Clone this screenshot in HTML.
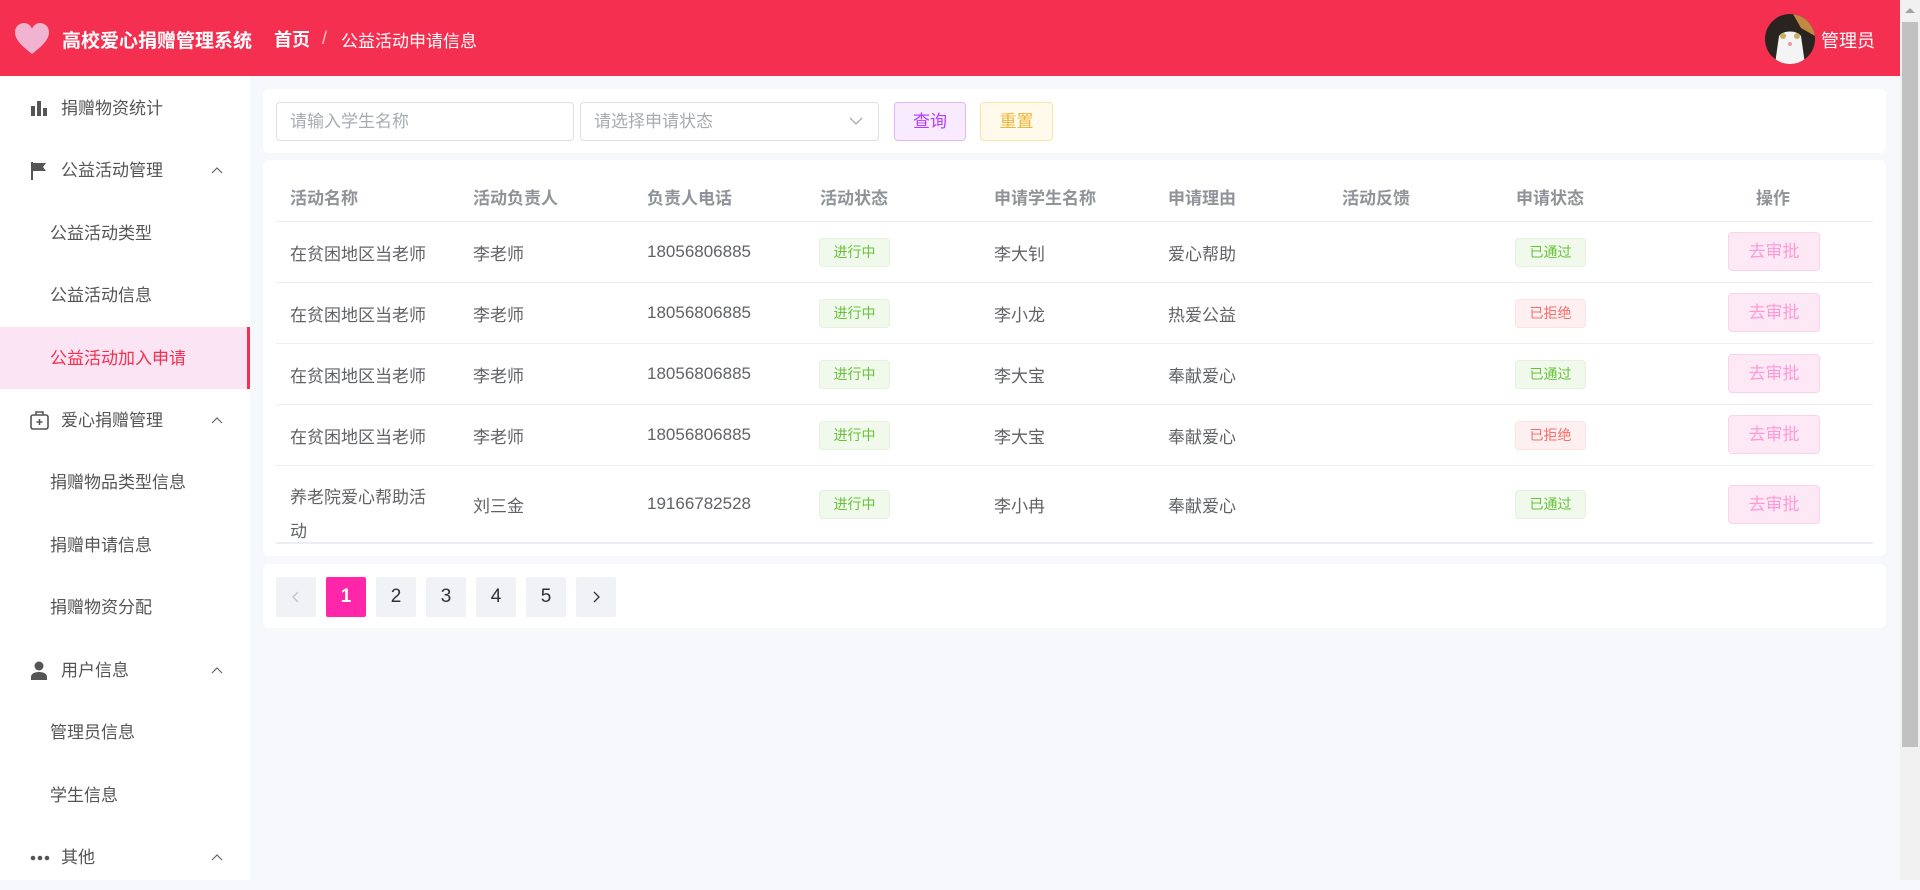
<!DOCTYPE html>
<html><head><meta charset="utf-8"><style>
*{box-sizing:border-box;margin:0;padding:0}
body{width:1920px;height:880px;overflow:hidden;background:#f6f8fc;font-family:"Liberation Sans","Noto Sans CJK SC",sans-serif;position:relative;color:#606266}
.a{position:absolute;white-space:nowrap}
.hdr{left:0;top:0;width:1900px;height:76px;background:#f42f4f}
.side{left:0;top:76px;width:250px;height:804px;background:#fff}
.mi{position:absolute;left:0;width:250px;height:62px;line-height:64px;font-size:17px;color:#555}
.mi .t{position:absolute;left:61px}
.mi.s .t{left:50px}
.mi .ar{position:absolute;left:211px;top:27px}
.mi .ic{position:absolute;left:30px;top:22px}
.card{position:absolute;background:#fff;border-radius:6px}
.th{position:absolute;top:184px;font-size:17px;font-weight:bold;color:#909399}
.td{position:absolute;font-size:17px;color:#606266;line-height:24px;margin-top:3px}
.n{margin-top:0}
.line{position:absolute;left:276px;width:1597px;height:1px;background:#ebeef5}
.tag{position:absolute;height:29px;line-height:27px;font-size:14px;text-align:center;border:1px solid;border-radius:4px}
.g{background:#f0f9eb;border-color:#e1f3d8;color:#67c23a}
.r{background:#fef0f0;border-color:#fde2e2;color:#f56c6c}
.btn{position:absolute;left:1728px;width:92px;height:39px;line-height:37px;text-align:center;font-size:17px;background:#fde9f6;border:1px solid #fcd3ee;color:#ff9ad6;border-radius:4px}
.pg{position:absolute;top:577px;width:40px;height:40px;line-height:40px;text-align:center;background:#f0f2f5;font-size:19px;color:#303133;border-radius:2px}
</style></head><body>
<div class="a hdr"></div>
<svg class="a" style="left:14px;top:22px" width="36" height="34" viewBox="0 0 36 34"><path d="M18 32 C8 24 1 18 1 10 C1 4 6 1 10 1 C14 1 17 4 18 7 C19 4 22 1 26 1 C30 1 35 4 35 10 C35 18 28 24 18 32Z" fill="#f1b4d0"/></svg>
<div class="a" style="left:62px;top:26px;font-size:19px;font-weight:bold;color:#fff">高校爱心捐赠管理系统</div>
<div class="a" style="left:274px;top:26px;font-size:18px;font-weight:bold;color:#fff">首页</div>
<div class="a" style="left:322px;top:28px;font-size:18px;color:#f7c7cf">/</div>
<div class="a" style="left:341px;top:27px;font-size:17px;color:#fff">公益活动申请信息</div>
<svg class="a" style="left:1765px;top:14px" width="50" height="50" viewBox="0 0 50 50"><defs><clipPath id="c"><circle cx="25" cy="25" r="25"/></clipPath></defs><g clip-path="url(#c)"><rect width="50" height="50" fill="#2a2420"/><path d="M28 0h22v22L36 14z" fill="#c08a40"/><path d="M14 22c4-6 18-6 22 0l4 28H10z" fill="#f4f4f4"/><circle cx="18" cy="22" r="3" fill="#c9b060"/><circle cx="32" cy="22" r="3" fill="#c9b060"/><circle cx="25" cy="30" r="2" fill="#e89aa0"/></g></svg>
<div class="a" style="left:1821px;top:27px;font-size:18px;color:#fff">管理员</div>
<div class="a" style="left:1900px;top:0;width:20px;height:880px;background:#f1f1f1"></div>
<div class="a" style="left:1902px;top:22px;width:16px;height:725px;background:#c1c1c1"></div>
<div class="a" style="left:1905px;top:8px;width:0;height:0;border-left:5px solid transparent;border-right:5px solid transparent;border-bottom:5px solid #a3a3a3"></div>

<div class="a side"></div>
<div class="mi" style="top:77px"><svg class="ic" width="18" height="18"><rect x="1" y="7" width="4" height="10" fill="#555"/><rect x="7" y="2" width="4" height="15" fill="#555"/><rect x="13" y="9" width="4" height="8" fill="#555"/></svg><span class="t">捐赠物资统计</span></div>
<div class="mi" style="top:139px"><svg class="ic" width="18" height="20"><path d="M2 1v18" stroke="#555" stroke-width="2"/><path d="M3 2h13l-3 4 3 4H3z" fill="#555"/></svg><span class="t">公益活动管理</span><svg class="ar" width="12" height="8"><path d="M1 7l5-5 5 5" stroke="#666" fill="none" stroke-width="1.2"/></svg></div>
<div class="mi s" style="top:202px"><span class="t">公益活动类型</span></div>
<div class="mi s" style="top:264px"><span class="t">公益活动信息</span></div>
<div class="mi s" style="top:327px;background:#fbe4f4;color:#f42f4f;border-right:3px solid #f42f4f"><span class="t">公益活动加入申请</span></div>
<div class="mi" style="top:389px"><svg class="ic" width="20" height="20"><rect x="1" y="4" width="17" height="14" rx="2" fill="none" stroke="#555" stroke-width="1.6"/><path d="M6 4V1h7v3M9.5 8v6M6.5 11h6" stroke="#555" stroke-width="1.6" fill="none"/></svg><span class="t">爱心捐赠管理</span><svg class="ar" width="12" height="8"><path d="M1 7l5-5 5 5" stroke="#666" fill="none" stroke-width="1.2"/></svg></div>
<div class="mi s" style="top:451px"><span class="t">捐赠物品类型信息</span></div>
<div class="mi s" style="top:514px"><span class="t">捐赠申请信息</span></div>
<div class="mi s" style="top:576px"><span class="t">捐赠物资分配</span></div>
<div class="mi" style="top:639px"><svg class="ic" width="18" height="20"><circle cx="9" cy="5" r="4.5" fill="#555"/><path d="M1 19v-3c0-3 3-5 8-5s8 2 8 5v3z" fill="#555"/></svg><span class="t">用户信息</span><svg class="ar" width="12" height="8"><path d="M1 7l5-5 5 5" stroke="#666" fill="none" stroke-width="1.2"/></svg></div>
<div class="mi s" style="top:701px"><span class="t">管理员信息</span></div>
<div class="mi s" style="top:764px"><span class="t">学生信息</span></div>
<div class="mi" style="top:826px"><svg class="ic" width="22" height="20"><circle cx="3" cy="10" r="2.3" fill="#555"/><circle cx="10" cy="10" r="2.3" fill="#555"/><circle cx="17" cy="10" r="2.3" fill="#555"/></svg><span class="t">其他</span><svg class="ar" width="12" height="8"><path d="M1 7l5-5 5 5" stroke="#666" fill="none" stroke-width="1.2"/></svg></div>

<div class="card" style="left:263px;top:89px;width:1623px;height:64px"></div>
<div class="a" style="left:276px;top:102px;width:298px;height:39px;border:1px solid #dcdfe6;border-radius:4px;font-size:17px;color:#a8abb2;line-height:37px;padding-left:13px">请输入学生名称</div>
<div class="a" style="left:580px;top:102px;width:299px;height:39px;border:1px solid #dcdfe6;border-radius:4px;font-size:17px;color:#a8abb2;line-height:37px;padding-left:13px">请选择申请状态</div>
<svg class="a" style="left:849px;top:117px" width="14" height="9"><path d="M1 1l6 6 6-6" stroke="#a8abb2" fill="none" stroke-width="1.3"/></svg>
<div class="a" style="left:894px;top:102px;width:72px;height:39px;border:1px solid #e4b4ff;background:#f8ebff;border-radius:4px;color:#b33cff;font-size:17px;text-align:center;line-height:37px">查询</div>
<div class="a" style="left:980px;top:102px;width:73px;height:39px;border:1px solid #fbe3a6;background:#fffaec;border-radius:4px;color:#f2b431;font-size:17px;text-align:center;line-height:37px">重置</div>

<div class="card" style="left:263px;top:160px;width:1623px;height:396px"></div>
<div class="th" style="left:290px">活动名称</div>
<div class="th" style="left:473px">活动负责人</div>
<div class="th" style="left:647px">负责人电话</div>
<div class="th" style="left:820px">活动状态</div>
<div class="th" style="left:994px">申请学生名称</div>
<div class="th" style="left:1168px">申请理由</div>
<div class="th" style="left:1342px">活动反馈</div>
<div class="th" style="left:1516px">申请状态</div>
<div class="th" style="left:1756px">操作</div>
<div class="line" style="top:221px"></div>
<div class="line" style="top:282px"></div>
<div class="line" style="top:343px"></div>
<div class="line" style="top:404px"></div>
<div class="line" style="top:465px"></div>
<div class="line" style="top:542px;height:2px"></div>

<div class="td" style="left:290px;top:240px">在贫困地区当老师</div><div class="td" style="left:473px;top:240px">李老师</div><div class="td n" style="left:647px;top:240px">18056806885</div><div class="tag g" style="left:819px;top:238px;width:71px">进行中</div><div class="td" style="left:994px;top:240px">李大钊</div><div class="td" style="left:1168px;top:240px">爱心帮助</div><div class="tag g" style="left:1515px;top:238px;width:71px">已通过</div><div class="btn" style="top:232px">去审批</div>

<div class="td" style="left:290px;top:301px">在贫困地区当老师</div><div class="td" style="left:473px;top:301px">李老师</div><div class="td n" style="left:647px;top:301px">18056806885</div><div class="tag g" style="left:819px;top:299px;width:71px">进行中</div><div class="td" style="left:994px;top:301px">李小龙</div><div class="td" style="left:1168px;top:301px">热爱公益</div><div class="tag r" style="left:1515px;top:299px;width:71px">已拒绝</div><div class="btn" style="top:293px">去审批</div>

<div class="td" style="left:290px;top:362px">在贫困地区当老师</div><div class="td" style="left:473px;top:362px">李老师</div><div class="td n" style="left:647px;top:362px">18056806885</div><div class="tag g" style="left:819px;top:360px;width:71px">进行中</div><div class="td" style="left:994px;top:362px">李大宝</div><div class="td" style="left:1168px;top:362px">奉献爱心</div><div class="tag g" style="left:1515px;top:360px;width:71px">已通过</div><div class="btn" style="top:354px">去审批</div>

<div class="td" style="left:290px;top:423px">在贫困地区当老师</div><div class="td" style="left:473px;top:423px">李老师</div><div class="td n" style="left:647px;top:423px">18056806885</div><div class="tag g" style="left:819px;top:421px;width:71px">进行中</div><div class="td" style="left:994px;top:423px">李大宝</div><div class="td" style="left:1168px;top:423px">奉献爱心</div><div class="tag r" style="left:1515px;top:421px;width:71px">已拒绝</div><div class="btn" style="top:415px">去审批</div>

<div class="td" style="left:290px;top:478px;line-height:34px">养老院爱心帮助活<br>动</div><div class="td" style="left:473px;top:492px">刘三金</div><div class="td n" style="left:647px;top:492px">19166782528</div><div class="tag g" style="left:819px;top:490px;width:71px">进行中</div><div class="td" style="left:994px;top:492px">李小冉</div><div class="td" style="left:1168px;top:492px">奉献爱心</div><div class="tag g" style="left:1515px;top:490px;width:71px">已通过</div><div class="btn" style="top:485px">去审批</div>

<div class="card" style="left:263px;top:564px;width:1623px;height:64px"></div>
<div class="pg" style="left:276px"><svg width="8" height="12" style="margin-top:14px"><path d="M6 1L1 6l5 5" stroke="#c0c4cc" fill="none" stroke-width="1.3"/></svg></div>
<div class="pg" style="left:326px;background:#ff26a9;color:#fff;font-weight:bold">1</div>
<div class="pg" style="left:376px">2</div>
<div class="pg" style="left:426px">3</div>
<div class="pg" style="left:476px">4</div>
<div class="pg" style="left:526px">5</div>
<div class="pg" style="left:576px"><svg width="8" height="12" style="margin-top:14px"><path d="M2 1l5 5-5 5" stroke="#303133" fill="none" stroke-width="1.3"/></svg></div>
</body></html>
